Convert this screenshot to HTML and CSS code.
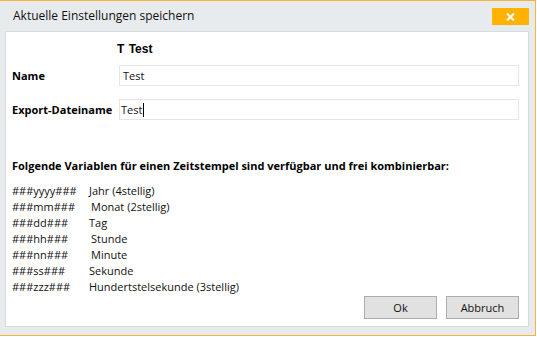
FILE: index.html
```html
<!DOCTYPE html>
<html lang="de">
<head>
<meta charset="utf-8">
<title>Aktuelle Einstellungen speichern</title>
<link rel="stylesheet" href="styles.css">
</head>
<body>
<div class="window">
  <div class="titlebar">
    <span class="title">Aktuelle Einstellungen speichern</span>
    <button class="close" aria-label="Schließen">
      <svg width="9" height="8" viewBox="0 0 9 8"><path d="M1 0.5 L8 7.5 M8 0.5 L1 7.5" stroke="#fff" stroke-width="2"/></svg>
    </button>
  </div>
  <div class="panel">
    <div class="header">T Test</div>
    <div class="field">
      <label class="label">Name</label>
      <div class="input">Test</div>
    </div>
    <div class="field field-second">
      <label class="label">Export-Dateiname</label>
      <div class="input input-tight">Test<span class="caret"></span></div>
    </div>
    <div class="heading">Folgende Variablen für einen Zeitstempel sind verfügbar und frei kombinierbar:</div>
    <div class="vars">
      <div class="code">###yyyy###</div><div class="desc">Jahr (4stellig)</div>
      <div class="code">###mm###</div><div class="desc d2">Monat (2stellig)</div>
      <div class="code">###dd###</div><div class="desc">Tag</div>
      <div class="code">###hh###</div><div class="desc d2">Stunde</div>
      <div class="code">###nn###</div><div class="desc d2">Minute</div>
      <div class="code">###ss###</div><div class="desc">Sekunde</div>
      <div class="code">###zzz###</div><div class="desc">Hundertstelsekunde (3stellig)</div>
    </div>
    <div class="buttons">
      <button class="btn">Ok</button>
      <button class="btn">Abbruch</button>
    </div>
  </div>
</div>
</body>
</html>
```
FILE: styles.css
```css
html, body {
  margin: 0;
  padding: 0;
  background: #ffffff;
}
body {
  width: 537px;
  height: 337px;
  overflow: hidden;
  font-family: "Open Sans", "Noto Sans", sans-serif;
  font-size: 11px;
  color: #111;
}
.window {
  box-sizing: border-box;
  width: 536px;
  height: 336px;
  background: #e8ebee;
  border-top: 1px solid #f2b53a;
  border-right: 1px solid #f2b53a;
  border-bottom: 1px solid #f2b53a;
  display: flex;
  flex-direction: column;
}
.titlebar {
  height: 30px;
  display: flex;
  align-items: flex-start;
  justify-content: space-between;
  padding: 0 6px 0 13px;
}
.title {
  font-size: 12px;
  line-height: 16px;
  margin-top: 7px;
  color: #111;
}
.close {
  margin-top: 7px;
  width: 37px;
  height: 17px;
  border: 0;
  padding: 0;
  background: #ffb300;
  display: flex;
  align-items: center;
  justify-content: center;
}
.panel {
  flex: 1;
  margin: 0 6px 8px 5px;
  background: #fff;
  border: 1px solid #d6dbe0;
  padding: 9px 9px 7px 6px;
  display: flex;
  flex-direction: column;
}
.header {
  font-family: "Liberation Sans", Arial, sans-serif;
  font-weight: bold;
  font-size: 12px;
  line-height: 16px;
  padding-left: 105px;
  word-spacing: 1px;
  color: #000;
}
.field {
  display: flex;
  align-items: center;
  margin-top: 8px;
}
.field-second {
  margin-top: 13px;
}
.label {
  width: 107px;
  font-weight: bold;
  color: #000;
}
.input {
  flex: 1;
  box-sizing: border-box;
  height: 21px;
  border: 1px solid #e4e6e9;
  padding: 0 3px;
  line-height: 19px;
  font-size: 11px;
  display: flex;
  align-items: center;
}
.input-tight {
  padding-left: 1px;
}
.caret {
  display: inline-block;
  width: 1px;
  height: 14px;
  background: #000;
  margin-left: 1px;
}
.heading {
  margin-top: 38px;
  font-weight: bold;
  line-height: 16px;
  color: #000;
}
.vars {
  margin-top: 9px;
  display: grid;
  grid-template-columns: 77px auto;
  grid-auto-rows: 16px;
  line-height: 16px;
}
.d2 {
  padding-left: 2px;
}
.buttons {
  margin-top: auto;
  display: flex;
  justify-content: flex-end;
  gap: 9px;
  padding-right: 0;
}
.btn {
  width: 73px;
  height: 23px;
  box-sizing: border-box;
  border: 1px solid #adadad;
  background: #e1e1e1;
  font-family: "Open Sans", "Noto Sans", sans-serif;
  font-size: 11px;
  color: #111;
  padding: 0;
}
```
